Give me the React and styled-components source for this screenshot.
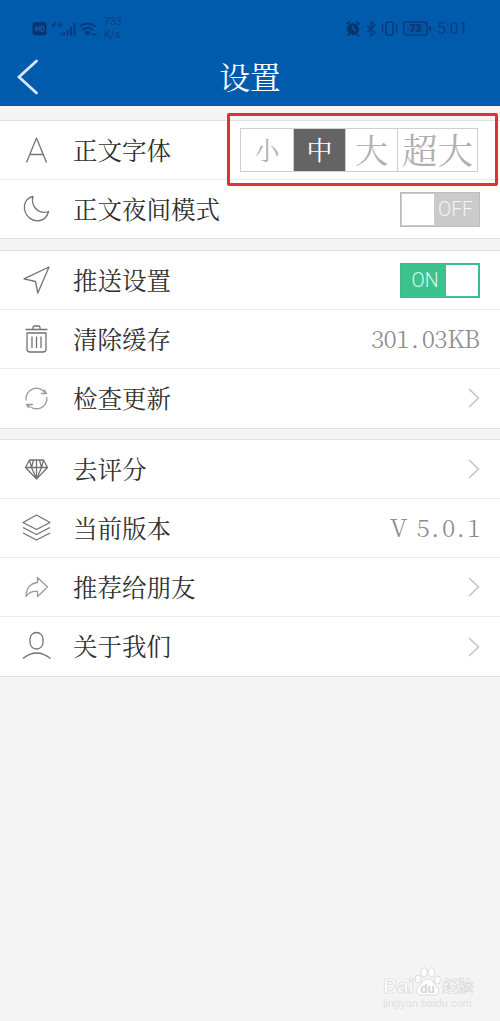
import React from "react";
import styled, { createGlobalStyle } from "styled-components";

function App() {
  return (
    <>
      <GlobalStyle />
      <Page>
        <Header>
          <StatusBar>
            <StatusLeft />
            <Speed>
              <span>733</span>
              <span>K/s</span>
            </Speed>
            <StatusRight />
            <Clock>5:01</Clock>
          </StatusBar>
          <TitleBar>
            <BackButton aria-label="返回">
              <svg width="24" height="38" viewBox="0 0 24 38">
                <path d="M20.500 3 3 19l17.500 16" />
              </svg>
            </BackButton>
            <Title>设置</Title>
          </TitleBar>
        </Header>

        <Group $gap={14}>
          <Row>
            <Icon name="font" />
            <Label>正文字体</Label>
            <SizePicker>
              <SizeOption $width={52} $size={25}>小</SizeOption>
              <SizeOption $width={52} $size={26} $active>中</SizeOption>
              <SizeOption $width={52} $size={33}>大</SizeOption>
              <SizeOption $width={80} $size={35.500}>超大</SizeOption>
            </SizePicker>
            <Highlight />
          </Row>
          <Row>
            <Icon name="moon" />
            <Label>正文夜间模式</Label>
            <Switch>
              <Knob />
              <SwitchText>OFF</SwitchText>
            </Switch>
          </Row>
        </Group>

        <Group $gap={10.600}>
          <Row>
            <Icon name="send" />
            <Label>推送设置</Label>
            <Switch $on>
              <SwitchText $on>ON</SwitchText>
              <Knob $on />
            </Switch>
          </Row>
          <Row>
            <Icon name="trash" />
            <Label>清除缓存</Label>
            <Value text="301.03KB" />
          </Row>
          <Row>
            <Icon name="refresh" />
            <Label>检查更新</Label>
            <Arrow />
          </Row>
        </Group>

        <Group $gap={10.400}>
          <Row>
            <Icon name="diamond" />
            <Label>去评分</Label>
            <Arrow />
          </Row>
          <Row>
            <Icon name="layers" />
            <Label>当前版本</Label>
            <Value text="V 5.0.1" />
          </Row>
          <Row>
            <Icon name="share" />
            <Label>推荐给朋友</Label>
            <Arrow />
          </Row>
          <Row>
            <Icon name="user" />
            <Label>关于我们</Label>
            <Arrow />
          </Row>
        </Group>

        <Watermark>
          <Brand>
            <span>Bai</span>
            <Paw />
            <BrandName>经验</BrandName>
          </Brand>
          <Site>jingyan.baidu.com</Site>
        </Watermark>
      </Page>
    </>
  );
}

const icons = {
  font: <path d="M10.500 32.500 20.500 8 30.500 32.500M14 24.500h13" />,
  moon: <path d="M17 7.500C10 9 7.500 15 8.500 20.500 10 28 17 33 24 31.500 28.500 30.500 31.500 27 32.500 22.500 27.500 24.500 22 23 18.800 18.500 16.300 15 16 11 17 7.500Z" />,
  send: <path d="M33 7 8 18.800 19.500 21.500 21.800 33Z" />,
  trash: (
    <>
      <path d="M9.500 10.500h22M17 10V8.500q0-1.500 1.500-1.500h4q1.500 0 1.500 1.500V10" />
      <path d="M11 14v16q0 3 3 3h13q3 0 3-3V14ZM16 17.500v11.500M20.500 17.500v11.500M25 17.500v11.500" />
    </>
  ),
  refresh: (
    <>
      <path d="M10.200 22.500A10.400 10.400 0 0 1 29.500 15.500M30.800 19A10.400 10.400 0 0 1 12 26.500" />
      <path d="M25 15.500h5.500L28 11.500M17 26.500h-6.500L13 30" />
    </>
  ),
  diamond: (
    <path d="M13.500 11h14l4 7.500-11 11.500L9.500 18.500ZM9.500 18.500h22M17.500 11 15.500 18.500l5 11.500 5-11.500-2-7.500M20.500 11v19M13.500 11l2 7.500M27.500 11l-2 7.500" />
  ),
  layers: (
    <path d="M20.500 7 34 14.500 20.500 21.500 7 14.500ZM7 19.500 20.500 26.500 34 19.500M7 25 20.500 32 34 25" />
  ),
  share: <path d="M21.500 10.500 31.500 20 21.500 29.500V24.500C16 24 12.500 25.500 10 29.500 10 21.500 14.500 16 21.500 15.500Z" />,
  user: (
    <>
      <rect x="14" y="6.500" width="13" height="16.500" rx="6.500" />
      <path d="M7 32.500Q20.500 21.500 34.500 32.500" />
    </>
  ),
};

const thin = ["refresh", "share"];

function Icon({ name }) {
  return (
    <IconSvg viewBox="0 0 41 41" $thin={thin.includes(name)}>
      {icons[name]}
    </IconSvg>
  );
}

function Arrow() {
  return (
    <ArrowSvg viewBox="0 0 12 20">
      <path d="M1 1 10.500 10 1 19" />
    </ArrowSvg>
  );
}

// every character sits in a half-width cell
function Value({ text }) {
  return (
    <ValueText>
      {text.split("").map((char, i) => (
        <Cell key={i} $wide={/[A-Z]/.test(char)} $dot={char === "."}>
          {char}
        </Cell>
      ))}
    </ValueText>
  );
}

function StatusLeft() {
  return (
    <StatusIcons width="66" height="18" viewBox="0 0 66 18">
      <rect x="0.500" y="2" width="14" height="13.500" rx="3" fill="#063574" />
      <path d="M4 6v5.500M7 6v5.500M4 8.800h3M9 6v5.500h1.500q1.500-.5 1.500-2.700T10.500 6Z" stroke="#1e65ae" fill="none" />
      <path d="M20.500 2.500h3v2h-3v2h3M29.500 2.500h-3v4h3v-2h-2" stroke="#063f85" strokeWidth="1.200" fill="none" />
      <path d="M29 13.500v2M32 12v3.500M35.500 9.500v6M39 6.500v9M42.500 3v12.500" stroke="#073b7d" strokeWidth="2" />
      <path d="M47.500 6.500q8-6 16 0M50 10q5.500-4 11 0M52.500 13q2.800-2 6 0" stroke="#073b7d" strokeWidth="1.800" fill="none" />
      <circle cx="55.500" cy="14.500" r="1.300" fill="#073b7d" />
      <path d="M59.500 14.500h5" stroke="#073b7d" strokeWidth="1.800" />
    </StatusIcons>
  );
}

function StatusRight() {
  return (
    <StatusIcons width="88" height="18" viewBox="0 0 88 18">
      <circle cx="8" cy="9" r="6" fill="#07346f" />
      <path d="m1.500 4.500 3-3M11.500 1.500l3 3M4 14l-1.500 2M12 14l1.500 2" stroke="#07346f" strokeWidth="1.700" />
      <path d="M8 5.500V9l3 2" stroke="#1760aa" strokeWidth="1.200" fill="none" />
      <path d="m22 5.500 8 7-4 3V2l4 3-8 7" stroke="#073b7d" strokeWidth="1.300" fill="none" />
      <rect x="41" y="2" width="7" height="13" rx="1.500" stroke="#073b7d" strokeWidth="1.600" fill="none" />
      <path d="M37.500 4.500v8M51.500 4.500v8" stroke="#073b7d" strokeWidth="1.500" />
      <rect x="59" y="2" width="23" height="13" rx="2.500" stroke="#073b7d" strokeWidth="1.400" fill="none" />
      <rect x="61.500" y="4.500" width="18" height="8" rx="1" fill="#0a4f9b" />
      <path d="M85 6v5" stroke="#073b7d" strokeWidth="2" />
      <text x="70.500" y="12" textAnchor="middle" fontFamily="Roboto, sans-serif" fontSize="10" fontWeight="700" fill="#07346f">
        73
      </text>
    </StatusIcons>
  );
}

function Paw() {
  return (
    <PawSvg width="27" height="30" viewBox="0 0 27 30">
      <g fill="#fff" stroke="#dadada">
        <ellipse cx="4" cy="12" rx="3" ry="4" />
        <ellipse cx="10" cy="5.500" rx="3" ry="4.500" />
        <ellipse cx="17.500" cy="5.500" rx="3" ry="4.500" />
        <ellipse cx="23.500" cy="13" rx="3" ry="4" />
        <path d="M13.500 12C8 12 8.500 17 4.500 19.500 1 23 3 28 7 28h13c5 0 6-5 3-8.500-4-2.500-4-7.500-9.500-7.500Z" />
      </g>
      <text x="13.500" y="25.500" textAnchor="middle" fontFamily="Liberation Sans, sans-serif" fontSize="12" fontWeight="700" fill="#d4d4d4">
        du
      </text>
    </PawSvg>
  );
}

const GlobalStyle = createGlobalStyle`
  * {
    box-sizing: border-box;
  }
  body {
    margin: 0;
    background-color: #f4f4f4;
    font-family: "Noto Serif CJK SC", "Liberation Serif", "Noto Sans CJK SC", serif;
  }
`;

const Page = styled.div`
  position: relative;
  width: 500px;
  height: 1021px;
  overflow: hidden;
  background-color: #f4f4f4;
`;

const Header = styled.header`
  height: 106px;
  background-color: #005bac;
`;

const StatusBar = styled.div`
  display: flex;
  align-items: center;
  height: 47px;
  padding: 10px 33px 0 32px;
`;

const StatusIcons = styled.svg`
  flex: none;
`;

const Speed = styled.div`
  display: flex;
  flex-direction: column;
  margin-left: 6px;
  margin-right: auto;
  padding-bottom: 1px;
  font: 10.500px/13px Roboto, sans-serif;
  color: #063f85;
`;

const Clock = styled.div`
  width: 30px;
  margin-left: 4px;
  font: 16px/18px Roboto, sans-serif;
  white-space: nowrap;
  color: #063f85;
`;

const TitleBar = styled.div`
  display: grid;
  grid-template-columns: 60px 1fr 60px;
  align-items: center;
  height: 59px;
`;

const BackButton = styled.button`
  display: flex;
  padding: 0 0 0 16px;
  border: 0;
  background: none;

  path {
    fill: none;
    stroke: #d9e6ff;
    stroke-width: 2.800;
    stroke-linecap: round;
  }
`;

const Title = styled.h1`
  margin: 0;
  font-size: 30.500px;
  font-weight: 400;
  line-height: 57px;
  text-align: center;
  color: #fff;
`;

const Group = styled.section`
  margin-top: ${(props) => props.$gap}px;
  border-top: 1px solid #dfdfdf;
  background-color: #fff;
`;

const Row = styled.div`
  position: relative;
  display: flex;
  align-items: center;
  height: 59.200px;
  padding: 0 20px 0 16px;
  border-bottom: 1px solid #ececec;

  &:last-child {
    border-bottom-color: #dfdfdf;
  }
`;

const IconSvg = styled.svg`
  flex: none;
  width: 41px;
  height: 41px;
  fill: none;
  stroke: ${(props) => (props.$thin ? "#9a9a9a" : "#737373")};
  stroke-width: 1.300;
  stroke-linejoin: round;
`;

const Label = styled.div`
  margin-left: 16px;
  margin-right: auto;
  padding-bottom: 1px;
  font-size: 24.500px;
  line-height: 36px;
  white-space: nowrap;
  color: #303030;
`;

const ArrowSvg = styled.svg`
  width: 12px;
  height: 20px;
  fill: none;
  stroke: #c4c4c4;
  stroke-width: 1.600;
`;

const ValueText = styled.div`
  display: flex;
  padding-bottom: 3px;
  font-size: 24.500px;
  font-weight: 300;
  line-height: 36px;
  color: #8c8c8c;
`;

const Cell = styled.span`
  width: ${(props) => (props.$wide ? 16.500 : 12.700)}px;
  padding-left: ${(props) => (props.$dot ? 2 : 0)}px;
  text-align: ${(props) => (props.$dot ? "left" : "center")};
  white-space: pre;

  &:nth-child(2):nth-last-child(6) {
    width: 10px;
  }
`;

const SizePicker = styled.div`
  display: flex;
  height: 44px;
  margin-right: 2px;
  border: 1px solid #cfcfcf;
`;

const SizeOption = styled.button`
  display: flex;
  align-items: center;
  justify-content: center;
  width: ${(props) => props.$width}px;
  padding: 0 0 2px;
  border: 0;
  background-color: ${(props) => (props.$active ? "#646464" : "#fff")};
  color: ${(props) => (props.$active ? "#fff" : "#b0b0b0")};
  font-family: inherit;
  font-size: ${(props) => props.$size}px;
  line-height: 38px;
  white-space: nowrap;

  & + & {
    border-left: 1px solid #cfcfcf;
  }
`;

// frame drawn over the first row
const Highlight = styled.div`
  position: absolute;
  top: -8px;
  left: 227px;
  width: 271px;
  height: 73px;
  border: 3px solid #e0322f;
  border-radius: 2px;
  z-index: 1;
`;

const Switch = styled.div`
  display: flex;
  width: 80px;
  height: 35px;
  padding: 2px;
  background-color: ${(props) => (props.$on ? "#3cc28e" : "#cacaca")};
  border: 1px solid ${(props) => (props.$on ? "#46b489" : "#bcbcbc")};
`;

const Knob = styled.div`
  width: 32px;
  margin: ${(props) => (props.$on ? "-1px" : "-1px 0 -1px -1px")};
  background-color: #fff;
`;

const SwitchText = styled.div`
  flex: 1;
  font: 300 19.500px/30px Roboto, "Liberation Sans", sans-serif;
  text-align: center;
  color: ${(props) => (props.$on ? "#d4faea" : "#f4f4f4")};
`;

const Watermark = styled.div`
  position: absolute;
  right: 25px;
  bottom: 11px;
  width: 92px;
`;

const Brand = styled.div`
  display: flex;
  align-items: flex-end;
  height: 30px;
  font: 700 20px/22px "Liberation Sans", sans-serif;
  white-space: nowrap;
  color: #fff;
  -webkit-text-stroke: 0.700px #d6d6d6;
`;

const PawSvg = styled.svg`
  flex: none;
`;

const BrandName = styled.span`
  margin-left: 1px;
  font: 700 15.500px/23px "Noto Sans CJK SC", sans-serif;
`;

const Site = styled.div`
  font: 11px/13px "Liberation Sans", sans-serif;
  color: #e0e0e0;
`;

export default App;
